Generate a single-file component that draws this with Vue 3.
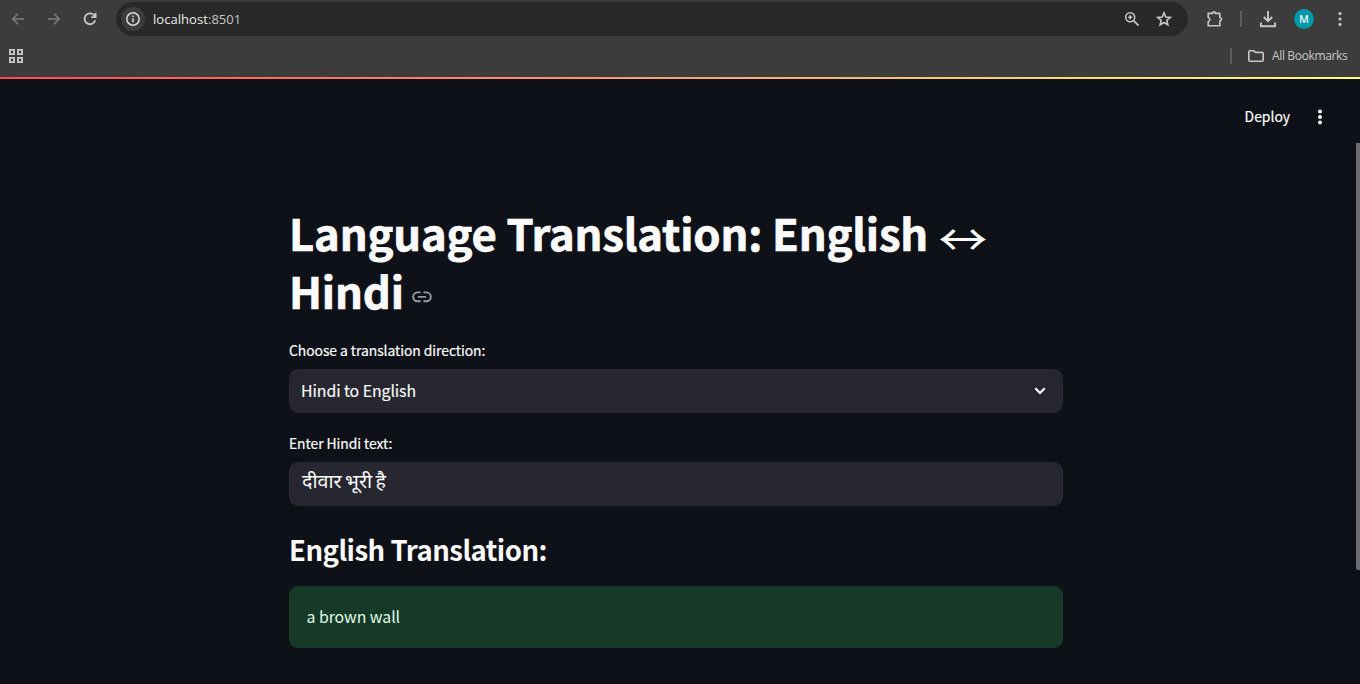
<script setup>
import { ref } from 'vue'

const direction = ref('Hindi to English')
const source = ref('दीवार भूरी है')
const result = ref('a brown wall')
</script>

<template>
  <div class="window">
    <header class="browser">
      <div class="toolbar">
        <svg class="nav dim back" width="16" height="16" viewBox="0 0 16 16"><path d="M14 8H3M8 2.8 2.8 8 8 13.2" /></svg>
        <svg class="nav dim forward" width="16" height="16" viewBox="0 0 16 16"><path d="M2 8h11M8 2.8 13.2 8 8 13.2" /></svg>
        <svg class="nav reload" width="16" height="16" viewBox="0 0 16 16"><path d="M13.2 9.2A5.4 5.4 0 1 1 12 4.2L13.3 5.8M13.6 1.8V6.2H9.2" /></svg>
        <div class="omnibox">
          <span class="site"><svg width="16" height="16" viewBox="0 0 16 16"><circle cx="8" cy="8" r="6.2" /><path d="M8 7.3v4M8 4.5v1.5" /></svg></span>
          <span class="url">localhost<i>:8501</i></span>
          <svg class="zoom" width="16" height="16" viewBox="0 0 16 16"><circle cx="6.2" cy="6.2" r="4.5" /><path d="M9.6 9.6 14.6 14.6M6.2 4.2v4M4.2 6.2h4" /></svg>
          <svg class="star" width="16" height="16" viewBox="0 0 16 16"><path d="m8 1.8 1.75 4.2 4.5.4-3.4 3 1 4.4L8 11.5l-3.85 2.3 1-4.4-3.4-3 4.5-.4z" /></svg>
        </div>
        <svg class="puzzle" width="18" height="18" viewBox="0 0 18 18"><path d="M2.2 3.4H6.6V2.6Q8 .8 9.4 2.6V3.4H13.8V7.6Q17.4 9.2 13.8 11.2V15.8H2.2V11.8Q5.6 9.6 2.2 7.4Z" /></svg>
        <span class="rule"></span>
        <svg class="download" width="18" height="18" viewBox="0 0 18 18"><path d="M9 1v10M4.8 7 9 11.2 13.2 7M2 12.5v3.7h14v-3.7" /></svg>
        <span class="avatar">M</span>
        <svg class="menu" width="4" height="16" viewBox="0 0 4 16"><circle cx="2" cy="2.6" r="1.6" /><circle cx="2" cy="8" r="1.6" /><circle cx="2" cy="13.4" r="1.6" /></svg>
      </div>
      <div class="bookmarks">
        <svg class="apps" width="14" height="14" viewBox="0 0 14 14"><path d="M.9.9h4.2v4.2H.9zM8.9.9h4.2v4.2H8.9zM.9 8.9h4.2v4.2H.9zM8.9 8.9h4.2v4.2H8.9z" /></svg>
        <span class="rule"></span>
        <svg class="folder" width="16" height="12" viewBox="0 0 16 12"><path d="M.8 10V2Q.8.8 2 .8H5.8L7.5 2.4H14Q15.2 2.4 15.2 3.6V10Q15.2 11.2 14 11.2H2Q.8 11.2.8 10Z" /></svg>
        <span class="all">All Bookmarks</span>
      </div>
    </header>
    <div class="decoration"></div>
    <section class="app">
      <div class="app-header">
        <span class="deploy">Deploy</span>
        <svg width="6" height="16" viewBox="0 0 6 16"><circle cx="3" cy="2.5" r="2" /><circle cx="3" cy="8" r="2" /><circle cx="3" cy="13.5" r="2" /></svg>
      </div>
      <main>
        <h1>Language Translation: English <span class="arrow">↔</span><br />Hindi<svg class="link" width="20" height="12" viewBox="0 0 20 12"><path d="M8.6 1.4H5.6a4.4 4.4 0 0 0 0 8.9H8.6M11.4 1.4h3a4.4 4.4 0 0 1 0 8.9h-3M6 5.9h8" /></svg></h1>
        <label>Choose a translation direction:</label>
        <div class="field select">
          <span>{{ direction }}</span>
          <svg width="12" height="8" viewBox="0 0 12 8"><path d="M1.3 1.3 6 6 10.7 1.3" /></svg>
        </div>
        <label class="second">Enter Hindi text:</label>
        <div class="field"><span class="hindi">{{ source }}</span></div>
        <h3>English Translation:</h3>
        <div class="success">{{ result }}</div>
      </main>
      <div class="scrollbar"></div>
    </section>
  </div>
</template>

<style>
body { margin: 0; background: #0e1117; overflow: hidden; }
</style>

<style scoped>
* { box-sizing: border-box; }
svg { display: block; flex: none; fill: none; stroke: #c7c7c7; stroke-width: 1.6; }
.window { width: 1360px; height: 684px; overflow: hidden; display: flex; flex-direction: column; background: #0e1117; }
.browser { height: 77px; background: #3c3c3c; font-family: "Open Sans", "Noto Sans", sans-serif; color: #c7c7c7; }
.toolbar { height: 38px; display: flex; align-items: center; padding-left: 10px; }
.dim { stroke: #7b7b7b; }
.forward { margin-left: 20px; }
.reload { margin-left: 20px; stroke-width: 1.8; }
.omnibox { width: 1072px; height: 34px; margin-left: 18px; border-radius: 17px; background: #282828; display: flex; align-items: center; padding: 0 16px 0 5px; }
.site { width: 24px; height: 24px; border-radius: 50%; background: #3c3c3c; display: grid; place-items: center; }
.site svg { stroke: #dcdcdc; stroke-width: 1.5; }
.url { margin-left: 8px; flex: 1; font-size: 13px; line-height: 20px; letter-spacing: .05px; color: #e8e8e8; }
.url i { font-style: normal; color: #c7c7c7; }
.star { margin-left: 16px; }
.puzzle { margin-left: 18px; }
.rule { width: 2px; height: 16px; background: #5e5e5e; }
.toolbar .rule { margin-left: 16px; }
.download { margin-left: 17px; stroke-width: 1.9; }
.avatar { width: 20px; height: 20px; margin-left: 17px; border-radius: 50%; background: #0097a7; color: #fff; font-size: 10.5px; line-height: 20px; text-align: center; -webkit-text-stroke: .2px #fff; }
.menu { margin-left: 24px; fill: #c7c7c7; stroke: none; }
.bookmarks { height: 36px; display: flex; align-items: center; padding: 0 12px 0 9px; }
.apps { stroke-width: 1.8; }
.bookmarks .rule { margin-left: auto; }
.folder { margin-left: 16px; }
.all { width: 76px; margin-left: 8px; font-size: 12px; line-height: 18px; white-space: nowrap; letter-spacing: -.35px; }
.decoration { height: 2px; background: linear-gradient(90deg, #ff4b4b, #fffd80); }
.app { position: relative; flex: 1; font-family: "Noto Sans CJK SC", sans-serif; color: #fafafa; font-kerning: normal; }
.app-header { height: 76px; display: flex; align-items: center; justify-content: flex-end; padding-right: 37px; }
.app-header svg { fill: #fafafa; stroke: none; margin-left: 27px; }
.deploy { font-size: 13.9px; line-height: 20px; padding-bottom: 2px; -webkit-text-stroke: .2px #fafafa; }
main { width: 774px; margin: 48px 0 0 289px; }
h1 { margin: 0; font-size: 43.6px; line-height: 58px; font-weight: 700; white-space: nowrap; letter-spacing: -.16px; -webkit-text-stroke: .7px #fafafa; }
.arrow { display: inline-block; font-weight: 400; transform: translate(3px, 4.5px) scale(1.13, 1); -webkit-text-stroke: 0; }
.link { display: inline-block; margin-left: 8px; vertical-align: 6px; stroke: #9a9b9d; stroke-width: 1.9; }
label { display: block; margin-top: 20px; height: 22px; font-size: 13.9px; line-height: 22px; letter-spacing: -.06px; -webkit-text-stroke: .2px #fafafa; }
.second { margin-top: 19px; }
.field { margin-top: 8px; height: 44px; border-radius: 9px; background: #262730; display: flex; align-items: center; padding: 0 17px 0 12px; font-size: 15.85px; line-height: 28px; letter-spacing: -.06px; }
.select { justify-content: space-between; -webkit-text-stroke: .15px #fafafa; }
.select svg { stroke: #fafafa; stroke-width: 2.2; }
.hindi { font-family: "Noto Sans", "Noto Sans Devanagari", sans-serif; font-size: 19.7px; letter-spacing: 0; word-spacing: -1.7px; padding: 0 0 6px 1px; }
h3 { margin: 25px 0 0; height: 37px; font-size: 27.5px; line-height: 37px; font-weight: 600; white-space: nowrap; letter-spacing: -.5px; }
.success { margin-top: 18px; height: 62px; border-radius: 9px; background: #173928; color: #dffde9; padding: 17px 17.6px; font-size: 15.85px; line-height: 28px; letter-spacing: -.06px; }
.scrollbar { position: absolute; right: 0; top: 64px; width: 4px; height: 427px; background: #6b6c70; border-radius: 0 0 0 2px; }
</style>
